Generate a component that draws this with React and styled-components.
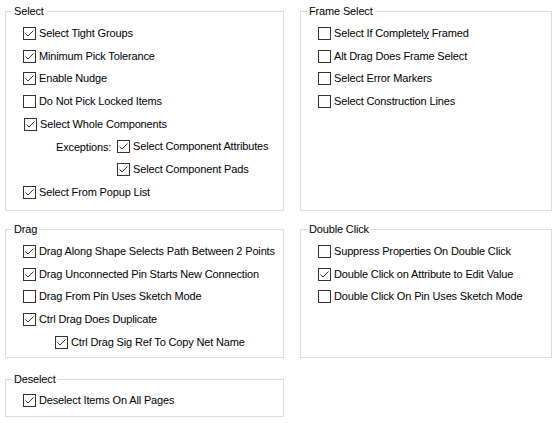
import React from "react";
import styled, { createGlobalStyle } from "styled-components";

const Global = createGlobalStyle`
  html, body { margin: 0; padding: 0; background: #ffffff; }
  body { font-family: "Liberation Sans", Arial, sans-serif; font-size: 11px; color: #000; letter-spacing: -0.15px; }
`;

const Page = styled.div`
  width: 558px;
  height: 423px;
  box-sizing: border-box;
  padding: 11px 0 0 5px;
  display: grid;
  grid-template-columns: 279px 252px;
  grid-template-rows: 200px 129px 41px;
  column-gap: 16px;
  row-gap: 18px;
`;

const Group = styled.div`
  position: relative;
  border: 1px solid #dcdcdc;
  box-sizing: border-box;
  padding: ${(p) => p.$top || 10}px 0 0 17px;
  margin-top: ${(p) => p.$offset || 0}px;
`;

const Legend = styled.span`
  position: absolute;
  top: -8px;
  left: 6px;
  padding: 0 2px;
  background: #fff;
  line-height: 14px;
  white-space: nowrap;
`;

const Row = styled.div`
  display: flex;
  align-items: center;
  height: 22.7px;
  padding-left: ${(p) => p.$indent || 0}px;
  white-space: nowrap;
`;

const Label = styled.label`
  display: flex;
  align-items: center;
  gap: 3px;
  line-height: 13px;
`;

const Box = styled.span`
  width: 13px;
  height: 13px;
  box-sizing: border-box;
  border: 1px solid #333333;
  background: #fff;
  display: inline-flex;
  align-items: center;
  justify-content: center;
  flex: none;
`;

const Caption = styled.span`
  width: ${(p) => p.$w}px;
  flex: none;
`;

const U = styled.span`
  text-decoration: underline;
`;

function Check({ checked, children }) {
  return (
    <Label>
      <Box>
        {checked && (
          <svg width="11" height="11" viewBox="0 0 11 11">
            <polyline
              points="1.5,5.5 4,8 9.5,2.5"
              fill="none"
              stroke="#333333"
              strokeWidth="1"
            />
          </svg>
        )}
      </Box>
      <span>{children}</span>
    </Label>
  );
}

export default function App() {
  return (
    <>
      <Global />
      <Page>
        <Group>
          <Legend>Select</Legend>
          <Row><Check checked>Select Tight Groups</Check></Row>
          <Row><Check checked>Minimum Pick Tolerance</Check></Row>
          <Row><Check checked>Enable Nudge</Check></Row>
          <Row><Check>Do Not Pick Locked Items</Check></Row>
          <Row $indent={1}><Check checked>Select Whole Components</Check></Row>
          <Row $indent={33}>
            <Caption $w={61}>Exceptions:</Caption>
            <Check checked>Select Component Attributes</Check>
          </Row>
          <Row $indent={94}><Check checked>Select Component Pads</Check></Row>
          <Row><Check checked>Select From Popup List</Check></Row>
        </Group>
        <Group>
          <Legend>Frame Select</Legend>
          <Row><Check>Select If Completel<U>y</U> Framed</Check></Row>
          <Row><Check>Alt Drag Does Frame Select</Check></Row>
          <Row><Check>Select Error Markers</Check></Row>
          <Row><Check>Select Construction Lines</Check></Row>
        </Group>
        <Group>
          <Legend>Drag</Legend>
          <Row><Check checked>Drag Along Shape Selects Path Between 2 Points</Check></Row>
          <Row><Check checked>Drag Unconnected Pin Starts New Connection</Check></Row>
          <Row><Check>Drag From Pin Uses Sketch Mode</Check></Row>
          <Row><Check checked>Ctrl Drag Does Duplicate</Check></Row>
          <Row $indent={32}><Check checked>Ctrl Drag Sig Ref To Copy Net Name</Check></Row>
        </Group>
        <Group>
          <Legend>Double Click</Legend>
          <Row><Check>Suppress Properties On Double Click</Check></Row>
          <Row><Check checked>Double Click on Attribute to Edit Value</Check></Row>
          <Row><Check>Double Click On Pin Uses Sketch Mode</Check></Row>
        </Group>
        <Group $top={9} $offset={3}>
          <Legend>Deselect</Legend>
          <Row><Check checked>Deselect Items On All Pages</Check></Row>
        </Group>
      </Page>
    </>
  );
}
